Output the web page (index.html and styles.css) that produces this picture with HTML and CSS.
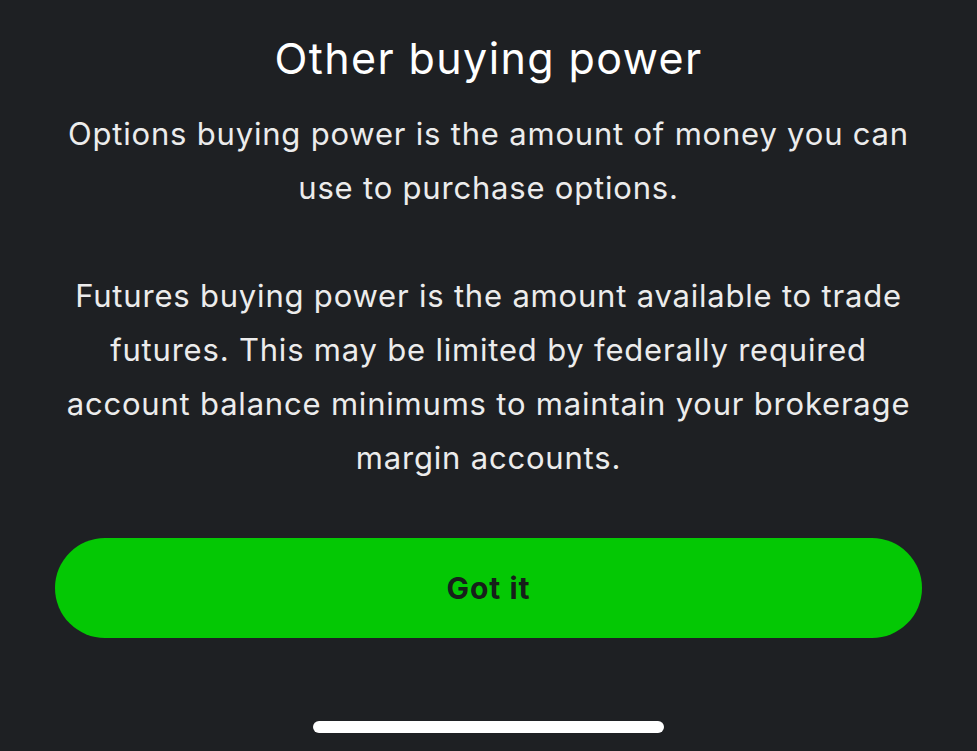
FILE: index.html
```html
<!DOCTYPE html>
<html lang="en">
<head>
<meta charset="utf-8">
<title>Other buying power</title>
<link rel="stylesheet" href="styles.css">
</head>
<body>
<main class="sheet">
  <h1 class="title">Other buying power</h1>
  <div class="content">
    <p class="para">Options buying power is the amount of money you can use to purchase options.</p>
    <p class="para">Futures buying power is the amount available to trade futures. This may be limited by federally required account balance minimums to maintain your brokerage margin accounts.</p>
  </div>
  <button class="cta" type="button">Got it</button>
  <div class="home-indicator"></div>
</main>
</body>
</html>
```

FILE: styles.css
```css
html, body {
  margin: 0;
  padding: 0;
  background: #1e2023;
}
body {
  width: 977px;
  height: 751px;
  overflow: hidden;
  font-family: Inter, "Noto Sans", sans-serif;
  color: #ececec;
}
.sheet {
  display: flex;
  flex-direction: column;
  align-items: center;
  height: 751px;
  padding: 0 55px;
  box-sizing: border-box;
}
.title {
  margin: 32px 0 0;
  font-size: 43px;
  font-weight: 400;
  letter-spacing: 1.4px;
  line-height: 52px;
  color: #ffffff;
  text-align: center;
}
.content {
  margin-top: 23px;
  width: 100%;
}
.para {
  margin: 0 0 54px;
  font-size: 31px;
  letter-spacing: 0.8px;
  line-height: 54px;
  text-align: center;
}
.para:last-child {
  margin-bottom: 0;
}
.cta {
  margin-top: 53px;
  width: 100%;
  height: 100px;
  border: none;
  border-radius: 50px;
  background: #04c804;
  color: #16201a;
  font-family: Inter, "Noto Sans", sans-serif;
  font-size: 30px;
  font-weight: 700;
  letter-spacing: 1px;
}
.home-indicator {
  margin-top: auto;
  margin-bottom: 18px;
  width: 351px;
  height: 12px;
  border-radius: 6px;
  background: #ffffff;
}
```
